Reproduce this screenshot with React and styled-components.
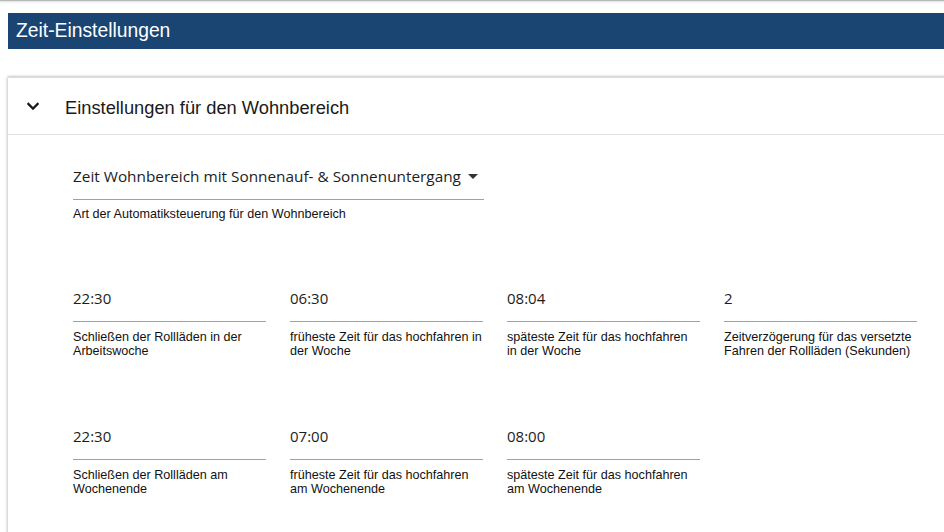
import React from "react";
import styled, { createGlobalStyle } from "styled-components";

const Global = createGlobalStyle`
  html, body { margin: 0; padding: 0; background: #fff; overflow: hidden; }
  body { font-family: "Liberation Sans", Arial, sans-serif; color: rgba(0,0,0,0.87); }
`;

const Page = styled.div`
  width: 944px;
  height: 532px;
  overflow: hidden;
  position: relative;
  padding-left: 8px;
  box-sizing: border-box;
`;

const TopShadow = styled.div`
  margin-left: -8px;
  height: 4px;
  background: linear-gradient(#9a9a9a 0, #d6d6d6 1px, #f4f4f4 2px, #fff 4px);
`;

const TitleBar = styled.div`
  margin-top: 9px;
  height: 36px;
  background: #1a4573;
  color: #fff;
  font-size: 19.3px;
  display: flex;
  align-items: center;
  padding-left: 8px;
`;

const Card = styled.section`
  margin-top: 28px;
  margin-right: -20px;
  background: #fff;
  box-shadow: 0 -1px 2px rgba(0,0,0,0.12), -1px 0 3px rgba(0,0,0,0.18);
  border-top: 1px solid #dcdcdc;
  height: 460px;
`;

const CardHeader = styled.div`
  height: 56px;
  display: flex;
  align-items: center;
  border-bottom: 1px solid #e0e0e0;
  padding-left: 13px;
  gap: 20px;
  font-size: 18.3px;
  color: #1a1a1a;
`;

const CardTitle = styled.span`
  padding-top: 3px;
`;

const Content = styled.div`
  padding: 25px 0 0 65px;
`;

const Select = styled.div`
  width: 411px;
  height: 40px;
  box-sizing: border-box;
  padding-top: 4px;
  border-bottom: 1px solid #a0a0a0;
  display: flex;
  align-items: flex-start;
  white-space: nowrap;
  font-family: "Open Sans", sans-serif;
  font-size: 15.35px;
  line-height: 24px;
  color: #1c1c1c;
`;

const SelectText = styled.span`
  flex: none;
`;

const Helper = styled.div`
  margin-top: 7px;
  font-size: 12.6px;
  line-height: 14px;
  color: #111;
`;

const Grid = styled.div`
  margin-top: 62px;
  display: grid;
  grid-template-columns: repeat(4, 193px);
  column-gap: 24px;
  row-gap: 63px;
`;

const Field = styled.div`
  display: flex;
  flex-direction: column;
`;

const Value = styled.div`
  height: 39px;
  box-sizing: border-box;
  padding-top: 3px;
  border-bottom: 1px solid #a0a0a0;
  font-family: "Open Sans", sans-serif;
  font-size: 15px;
  line-height: 24px;
  color: #1c1c1c;
`;

const Label = styled.div`
  margin-top: 8px;
  font-size: 12.6px;
  line-height: 14px;
  height: 28px;
  color: #111;
`;

const Chevron = () => (
  <svg width="24" height="24" viewBox="0 0 24 24">
    <path d="M7.41 8.59 12 13.17l4.59-4.58L18 10l-6 6-6-6z" fill="#1a1a1a" stroke="#1a1a1a" strokeWidth="0.4" />
  </svg>
);

const Arrow = () => (
  <svg width="24" height="24" viewBox="0 0 24 24" style={{ flex: "none" }}>
    <path d="M7 10l5 5 5-5z" fill="#333" />
  </svg>
);

const fields = [
  ["22:30", "Schließen der Rollläden in der Arbeitswoche"],
  ["06:30", "früheste Zeit für das hochfahren in der Woche"],
  ["08:04", "späteste Zeit für das hochfahren in der Woche"],
  ["2", "Zeitverzögerung für das versetzte Fahren der Rollläden (Sekunden)"],
  ["22:30", "Schließen der Rollläden am Wochenende"],
  ["07:00", "früheste Zeit für das hochfahren am Wochenende"],
  ["08:00", "späteste Zeit für das hochfahren am Wochenende"],
];

export default function App() {
  return (
    <>
      <Global />
      <Page>
        <TopShadow />
        <TitleBar>Zeit-Einstellungen</TitleBar>
        <Card>
          <CardHeader>
            <Chevron />
            <CardTitle>Einstellungen für den Wohnbereich</CardTitle>
          </CardHeader>
          <Content>
            <Select>
              <SelectText>Zeit Wohnbereich mit Sonnenauf- &amp; Sonnenuntergang</SelectText>
              <Arrow />
            </Select>
            <Helper>Art der Automatiksteuerung für den Wohnbereich</Helper>
            <Grid>
              {fields.map(([v, l], i) => (
                <Field key={i}>
                  <Value>{v}</Value>
                  <Label>{l}</Label>
                </Field>
              ))}
            </Grid>
          </Content>
        </Card>
      </Page>
    </>
  );
}
